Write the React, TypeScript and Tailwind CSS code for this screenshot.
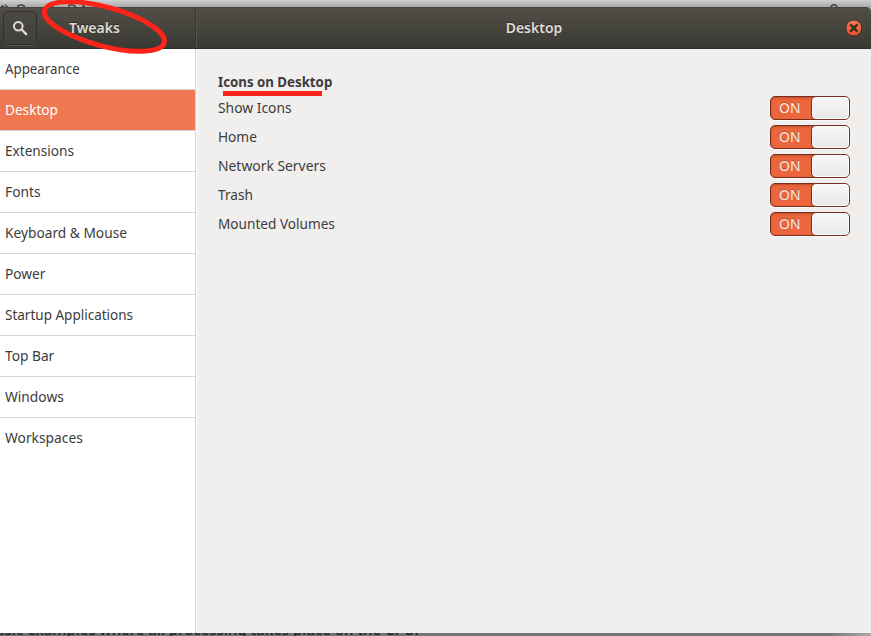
const categories = [
  { name: 'Appearance', fit: 'scale-x-[0.887]' },
  { name: 'Desktop', fit: 'scale-x-[0.908]' },
  { name: 'Extensions', fit: 'scale-x-[0.907]' },
  { name: 'Fonts', fit: 'scale-x-[0.92]' },
  { name: 'Keyboard & Mouse', fit: 'scale-x-[0.915]' },
  { name: 'Power', fit: 'scale-x-[0.91]' },
  { name: 'Startup Applications', fit: 'scale-x-[0.9]' },
  { name: 'Top Bar', fit: 'scale-x-[0.915]' },
  { name: 'Windows', fit: 'scale-x-[0.918]' },
  { name: 'Workspaces', fit: 'scale-x-[0.92]' },
];

const settings = [
  { name: 'Show Icons', fit: 'scale-x-[0.922]' },
  { name: 'Home', fit: 'scale-x-[0.91]' },
  { name: 'Network Servers', fit: 'scale-x-[0.925]' },
  { name: 'Trash', fit: 'scale-x-[0.91]' },
  { name: 'Mounted Volumes', fit: 'scale-x-[0.907]' },
];

function Switch() {
  return (
    <div className="flex h-6 w-20 overflow-hidden rounded-[5px] border border-[#792f1c] bg-[#eb663c] shadow-[0_1px_0_#fafafa] inset-shadow-[0_1px_2px_#b94d29]">
      <span className="w-10 shrink-0 pl-2 leading-5 text-[#fbece5] [text-shadow:0_-1px_0_#b94d29]">
        <span className="inline-block origin-left scale-x-[0.93]">ON</span>
      </span>
      <span className="-my-px -mr-px h-6 w-[39px] shrink-0 rounded-[5px] border border-[#792f1c] bg-linear-to-b from-[#f7f7f6] to-[#e9e8e6] inset-shadow-[0_0_0_1px_#fdfdfd]" />
    </div>
  );
}

export default function App() {
  return (
    <div className="relative flex h-[636px] w-[871px] flex-col overflow-hidden bg-[#777777] font-['Noto_Sans',sans-serif] text-[15px] text-[#3c3c3c]">
      <div className="relative h-[7px] shrink-0 bg-linear-to-b from-[#d0d0d0] to-[#aaaaaa]">
        <svg className="absolute inset-0" width="871" height="7" fill="none" stroke="#444444" strokeWidth="1.5">
          <path d="M1 6.2h3M5 4.8l2.5 2.5M17.5 7.5c0-3.5 7-3.5 7 0M53 5v2M69 8V5h3q3 0 3.5 3M82 6.2h3M831 8c0-4.5 6-4.5 6 0" />
        </svg>
      </div>
      <div className="shrink-0 bg-[#aaaaaa]">
        <header className="flex h-[42px] rounded-tr-[5px] border-t border-b border-t-[#45443e] border-b-[#302f2b] bg-linear-to-b from-[#504e46] to-[#3a3934] font-semibold text-[#dfdbd2] [text-shadow:0_-1px_0_#2b2a27]">
          <div className="flex w-[196px] shrink-0 border-r border-[#383732] pt-[3px] pl-[3px]">
            <button
              className="flex h-[34px] w-[34px] items-center justify-center rounded-[5px] border border-[#302f2b] bg-[#474640]/40 shadow-[0_1px_0_#56544c]"
              aria-label="Search"
            >
              <svg width="16" height="16" viewBox="0 0 16 16" fill="none" stroke="#dfdbd2">
                <circle cx="6.3" cy="6.2" r="4.3" strokeWidth="2" />
                <path d="m9.6 9.5 4.6 4.6" strokeWidth="2.4" strokeLinecap="round" />
              </svg>
            </button>
            <h1 className="ml-8 origin-left scale-x-[0.933] pt-1.5 leading-5">Tweaks</h1>
          </div>
          <div className="flex flex-1 items-center border-l border-[#54524a]">
            <h2 className="w-[674px] scale-x-[0.933] pb-[3px] text-center leading-5">Desktop</h2>
          </div>
          <button className="absolute top-[19px] right-[9px]" aria-label="Close">
            <svg className="block" width="17" height="18" viewBox="0 0 17 18">
              <defs>
                <linearGradient id="close" x2="0" y2="1">
                  <stop stopColor="#fb7b58" />
                  <stop offset="1" stopColor="#e84e24" />
                </linearGradient>
              </defs>
              <circle cx="8.8" cy="9" r="8" fill="url(#close)" stroke="#33312d" />
              <path d="m5.2 5.4 7.2 7.2m0-7.2-7.2 7.2" stroke="#352c22" strokeWidth="2.3" />
            </svg>
          </button>
        </header>
      </div>
      <div className="flex h-[584px] shrink-0">
        <nav className="w-[196px] shrink-0 border-r border-[#d5d5d4] bg-white">
          {categories.map(({ name, fit }) => (
            <div
              key={name}
              className={
                'h-[41px] border-b border-[#d8d8d8] pl-[5px] leading-[38px] last:border-transparent ' +
                (name === 'Desktop' ? 'bg-[#f07850] text-white' : 'bg-white')
              }
            >
              <span className={'inline-block origin-left whitespace-nowrap ' + fit}>{name}</span>
            </div>
          ))}
        </nav>
        <main className="flex-1 border-l-2 border-[#f6f6f5] bg-[#f0efed] pt-[22px] pr-[21px] pl-5">
          <h3 className="h-[22px] origin-left scale-x-[0.884] leading-5 font-bold">Icons on Desktop</h3>
          {settings.map(({ name, fit }) => (
            <div key={name} className="flex h-[29px] items-center justify-between">
              <span className={'origin-left ' + fit}>{name}</span>
              <Switch />
            </div>
          ))}
        </main>
      </div>
      <footer className="relative h-[3px] shrink-0 overflow-hidden bg-linear-to-r from-[#747474] from-95% to-[#aaaaaa]">
        <p className="absolute -top-[14px] -left-1 text-[15px] leading-5 font-medium whitespace-nowrap text-[#202020]">
          asic examples where all processing takes place on the CPU.
        </p>
      </footer>
      <svg className="pointer-events-none absolute inset-0" width="871" height="636">
        <ellipse cx="104.3" cy="26.5" rx="62" ry="19.5" transform="rotate(15 104.3 26.5)" fill="none" stroke="#ff2419" strokeWidth="5" />
        <path d="M223 93.5h99" stroke="#ff2419" strokeWidth="5" />
      </svg>
    </div>
  );
}
